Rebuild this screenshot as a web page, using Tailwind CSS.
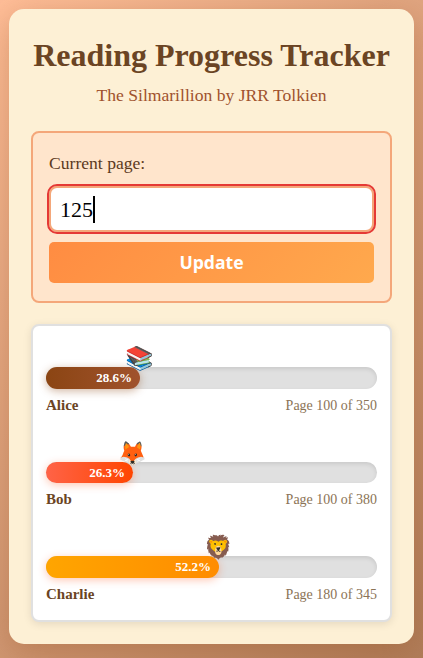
<!DOCTYPE html>
<html lang="en">
<head>
    <meta charset="UTF-8">
    <meta name="viewport" content="width=device-width, initial-scale=1.0">
    <title>Reading Progress Tracker</title>
    <script src="https://cdn.jsdelivr.net/npm/@tailwindcss/browser@4"></script>
</head>
<body class="h-[658px] overflow-hidden p-[9px] bg-[linear-gradient(135deg,#ffbe98,#b07d5a)] font-['Liberation_Serif',serif]">

    <div class="h-[635px] rounded-[15px] bg-[#fdf0d5] px-[22px] pt-[26px] shadow-[0_8px_32px_rgba(139,69,19,0.3)]">
        <h1 class="text-center text-[32px] leading-[40px] font-bold text-[#6b4423]">Reading Progress Tracker</h1>
        <p class="mt-[10px] text-center text-[17.6px] leading-[20px] text-[#a0522d]">The Silmarillion by JRR Tolkien</p>

        <!-- Update form -->
        <div class="mt-[26px] h-[172px] rounded-[8px] border-2 border-[#f4a77a] bg-[#ffe5cc] px-4 pt-[20px]">
            <label class="block text-[17.6px] leading-[20px] text-[#5c3a1e]">Current page:</label>
            <div class="mt-[13px] flex h-[46px] items-center rounded-[8px] border-2 border-[#f4a77a] bg-white px-[9px] text-[22px] text-black outline-2 outline-[#e53935]">
                <span>125</span><span class="h-[27px] w-[2px] bg-black"></span>
            </div>
            <button class="mt-[10px] h-[41px] w-full rounded-[5px] bg-[linear-gradient(135deg,#ff8c42,#ffa94d)] font-['Open_Sans',sans-serif] text-[17.6px] font-bold text-white">Update</button>
        </div>

        <!-- Readers -->
        <div class="mt-[21px] flex h-[298px] flex-col rounded-[8px] border-2 border-[#e0e0e0] bg-white px-[13px] pt-[41px] shadow-[0_2px_8px_rgba(0,0,0,0.1)]">

            <div>
                <div class="relative h-[22px] rounded-full bg-[#e0e0e0] shadow-[inset_0_2px_4px_rgba(0,0,0,0.1)]">
                    <div class="flex h-full w-[94px] items-center justify-end rounded-full bg-[linear-gradient(90deg,#8b4513,#a0522d)] pr-[8px] text-[13px] font-bold text-white shadow-[0_2px_8px_rgba(139,69,19,0.4)]">28.6%</div>
                    <span class="absolute left-[79px] top-[-22px] text-[23px] leading-[28px]">📚</span>
                </div>
                <div class="mt-[7px] flex items-center justify-between leading-[19px]">
                    <span class="text-[15px] font-bold text-[#6b4423]">Alice</span>
                    <span class="text-[14px] text-[#8b7355]">Page 100 of 350</span>
                </div>
            </div>

            <div class="mt-[47px]">
                <div class="relative h-[21px] rounded-full bg-[#e0e0e0] shadow-[inset_0_2px_4px_rgba(0,0,0,0.1)]">
                    <div class="flex h-full w-[87px] items-center justify-end rounded-full bg-[linear-gradient(90deg,#ff6347,#ff4500)] pr-[8px] text-[13px] font-bold text-white shadow-[0_2px_8px_rgba(255,69,0,0.3)]">26.3%</div>
                    <span class="absolute left-[72px] top-[-22px] text-[23px] leading-[28px]">🦊</span>
                </div>
                <div class="mt-[7px] flex items-center justify-between leading-[19px]">
                    <span class="text-[15px] font-bold text-[#6b4423]">Bob</span>
                    <span class="text-[14px] text-[#8b7355]">Page 100 of 380</span>
                </div>
            </div>

            <div class="mt-[47px]">
                <div class="relative h-[22px] rounded-full bg-[#e0e0e0] shadow-[inset_0_2px_4px_rgba(0,0,0,0.1)]">
                    <div class="flex h-full w-[173px] items-center justify-end rounded-full bg-[linear-gradient(90deg,#ffa500,#ff8c00)] pr-[8px] text-[13px] font-bold text-white shadow-[0_2px_8px_rgba(255,69,0,0.3)]">52.2%</div>
                    <span class="absolute left-[158px] top-[-22px] text-[23px] leading-[28px]">🦁</span>
                </div>
                <div class="mt-[7px] flex items-center justify-between leading-[19px]">
                    <span class="text-[15px] font-bold text-[#6b4423]">Charlie</span>
                    <span class="text-[14px] text-[#8b7355]">Page 180 of 345</span>
                </div>
            </div>

        </div>
    </div>

</body>
</html>
